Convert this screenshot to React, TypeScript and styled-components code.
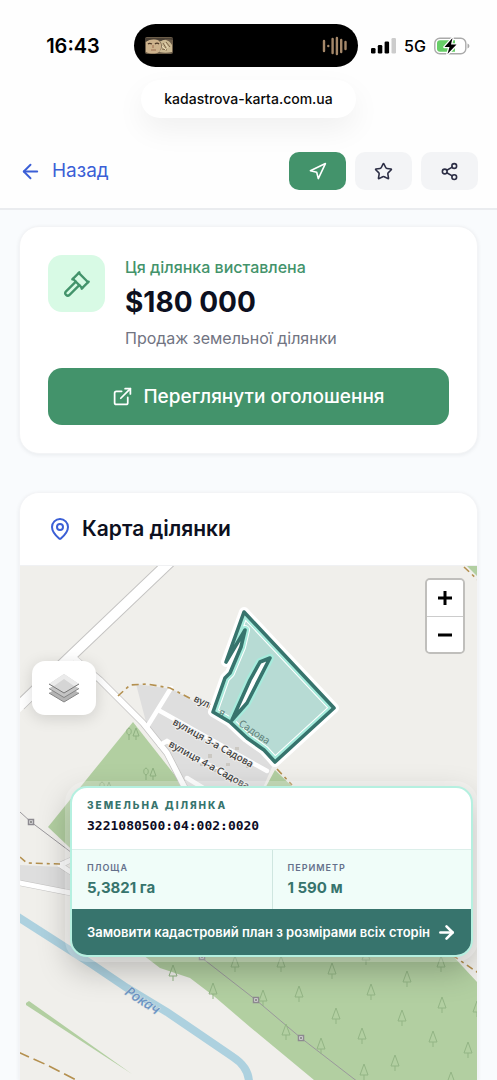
import React from "react";
import styled, { createGlobalStyle } from "styled-components";
import { ArrowLeft, ArrowRight, ExternalLink, Gavel, MapPin, Navigation, Share2, Star } from "lucide-react";

const Global = createGlobalStyle`
  *, *::before, *::after { box-sizing: border-box; }
  body { margin: 0; background: #f9fbfd; color: #0d1020; font-family: Inter, "Liberation Sans", sans-serif; }
  button { font: inherit; cursor: pointer; }
  h2, p, dl, dd { margin: 0; }
`;

const Page = styled.div`
  min-height: 100vh;
  display: flex;
  flex-direction: column;
`;

const Top = styled.header`
  background: #fefefe;
  border-bottom: 2px solid #eaecef;
`;

const StatusBar = styled.div`
  display: grid;
  grid-template-columns: 1fr 224px 1fr;
  align-items: center;
  padding: 24px 5px 0 0;
  color: #000;
`;

const Clock = styled.time`
  padding-left: 12px;
  text-align: center;
  font-size: 20px;
  line-height: 24px;
  font-weight: 600;
`;

const Island = styled.div`
  height: 43px;
  border-radius: 22px;
  background: #000;
  display: flex;
  align-items: center;
  justify-content: space-between;
  padding: 0 10px 0 11px;
`;

const Signals = styled.div`
  display: flex;
  align-items: center;
  gap: 8px;
  padding-left: 13px;
  font-size: 16px;
  line-height: 20px;
  font-weight: 500;
`;

const Address = styled.div`
  width: fit-content;
  margin: 13px auto 0;
  padding: 0 23px;
  border-radius: 20px;
  background: #fff;
  box-shadow: 0 12px 30px rgba(0, 0, 0, 0.06);
  color: #0a0a0a;
  font-size: 14px;
  line-height: 38px;
  font-weight: 500;
`;

const Toolbar = styled.nav`
  display: flex;
  align-items: center;
  justify-content: space-between;
  padding: 34px 19px 18px;
`;

const Back = styled.a`
  display: flex;
  align-items: center;
  gap: 10px;
  color: #3b5fd6;
  text-decoration: none;
  font-size: 19px;
  line-height: 28px;
`;

const Actions = styled.div`
  display: flex;
  gap: 9px;
`;

const Action = styled.button<{ $active?: boolean }>`
  display: grid;
  place-items: center;
  width: 57px;
  height: 38px;
  padding: 0;
  border: 0;
  border-radius: 10px;
  background: ${(p) => (p.$active ? "#43936b" : "#f3f4f6")};
  color: ${(p) => (p.$active ? "#fff" : "#2c2e45")};
`;

const Main = styled.main`
  flex: 1;
  display: flex;
  flex-direction: column;
  gap: 38px;
  padding: 16px 19px 0;
`;

const Card = styled.section`
  border: 1px solid #f3f4f6;
  border-radius: 20px;
  background: #fff;
  box-shadow: 0 1px 4px rgba(15, 23, 42, 0.07);
`;

const Listing = styled(Card)`
  display: flex;
  flex-direction: column;
  gap: 17px;
  padding: 28px;
`;

const Offer = styled.div`
  display: flex;
  gap: 20px;
`;

const IconTile = styled.div`
  display: grid;
  place-items: center;
  flex: none;
  width: 57px;
  height: 57px;
  border-radius: 14px;
  background: #d8fae5;
  color: #43936b;
`;

const Kicker = styled.p`
  color: #43936b;
  font-size: 16px;
  line-height: 24px;
  font-weight: 500;
`;

const Price = styled.p`
  font-size: 28px;
  line-height: 46px;
  font-weight: 700;
`;

const Caption = styled.p`
  color: #717482;
  font-size: 16px;
  line-height: 26px;
`;

const Primary = styled.button`
  display: flex;
  align-items: center;
  justify-content: center;
  gap: 10px;
  height: 57px;
  border: 0;
  border-radius: 14px;
  background: #43936b;
  color: #fff;
  font-size: 19px;
  font-weight: 500;
`;

const MapCard = styled(Card)`
  flex: 1;
  display: flex;
  flex-direction: column;
  overflow: hidden;
  border-bottom: 0;
  border-radius: 20px 20px 0 0;
`;

const MapHeader = styled.div`
  display: flex;
  align-items: center;
  gap: 10px;
  padding: 20px 28px;
  border-bottom: 1px solid #f0f1f3;
  svg { color: #3b5fd6; }
`;

const Title = styled.h2`
  font-size: 21px;
  line-height: 32px;
  font-weight: 600;
`;

const MapView = styled.div`
  position: relative;
  flex: 1;
  min-height: 480px;
  background: #f0efeb;
`;

const MapSvg = styled.svg`
  position: absolute;
  inset: 0;
  width: 100%;
  height: 100%;
`;

const ZoomBox = styled.div`
  position: absolute;
  top: 12px;
  right: 12px;
  width: 40px;
  border: 2px solid rgba(0, 0, 0, 0.2);
  border-radius: 5px;
  background-clip: padding-box;
  overflow: hidden;
`;

const ZoomButton = styled.button`
  display: grid;
  place-items: center;
  width: 100%;
  height: 36px;
  padding: 0;
  border: 0;
  background: #fff;
  color: #000;
  & + & { border-top: 1px solid #ccc; }
`;

const Layers = styled.button`
  position: absolute;
  top: 95px;
  left: 12px;
  display: grid;
  place-items: center;
  width: 64px;
  height: 54px;
  padding: 0;
  border: 0;
  border-radius: 13px;
  background: #fff;
  box-shadow: 0 3px 16px rgba(0, 0, 0, 0.14);
`;

const Popup = styled.article`
  position: absolute;
  top: 220px;
  left: 50px;
  right: 4px;
  border: 2px solid #b5f0e0;
  border-radius: 17px;
  overflow: hidden;
  background: #fff;
  box-shadow: 0 0 0 5px rgba(255, 255, 255, 0.22), 0 12px 32px rgba(0, 0, 0, 0.25);
`;

const PopupHead = styled.div`
  padding: 8px 15px 11px;
`;

const PopupKicker = styled.p`
  color: #37746d;
  font-size: 10px;
  line-height: 18px;
  font-weight: 800;
  letter-spacing: 2px;
`;

const Cadastral = styled.p`
  color: #0d0c25;
  font-family: "DejaVu Sans Mono", monospace;
  font-size: 13px;
  line-height: 24px;
  font-weight: 700;
`;

const Stats = styled.dl`
  display: grid;
  grid-template-columns: 1fr 1fr;
  border-top: 1px solid #dcefea;
  background: #f0fdf9;
`;

const Stat = styled.div`
  padding: 9px 15px 11px;
  & + & { border-left: 1px solid #cfe6e0; }
  dt { color: #64708b; font-size: 9px; line-height: 18px; font-weight: 600; letter-spacing: 1px; }
  dd { color: #37746d; font-size: 15px; line-height: 21px; font-weight: 700; }
`;

const Order = styled.button`
  display: flex;
  align-items: center;
  justify-content: space-between;
  width: 100%;
  height: 46px;
  padding: 0 14px 0 15px;
  border: 0;
  background: #37746d;
  color: #fff;
  font-size: 13px;
  font-weight: 600;
  white-space: nowrap;
`;

const PARCEL = "M244 612 334 708 275 762 264 750 247 738 230 722 213 712 225 678 230 673 241 647 245 630 226 662Z";
const GAP = "M232 720 250 680 260 662 270 658 247 703Z";

const firs = [
  [281, 963], [332, 970], [366, 956], [407, 978], [441, 963], [263, 997], [299, 993],
  [371, 991], [442, 1004], [336, 1015], [402, 1017], [286, 1031], [362, 1035], [433, 1038],
  [468, 1049], [321, 1045], [395, 1062], [364, 1071], [451, 1079], [477, 1008],
  [173, 972], [213, 990], [235, 963],
];

const TerrainMap = () => (
  <MapSvg viewBox="20 566 457 514" preserveAspectRatio="xMidYMid slice" aria-hidden="true">
    <defs>
      <clipPath id="parcel"><path d={`${PARCEL} ${GAP}`} clipRule="evenodd" /></clipPath>
      <g id="fir" fill="none" stroke="#93b585" strokeWidth="1"><path d="M0-7 4 4H-4ZM0 4v5" /></g>
      <g id="grove" fill="none" stroke="#8fb181" strokeWidth="1">
        <path d="M-3-5c3 1 3 6 0 7-3-1-3-6 0-7ZM-3 2v5M4-5 7 3H1ZM4 3v4" />
      </g>
      <g id="pylon"><path d="M-2.500-2.500h5v5h-5Z" fill="#ddd" stroke="#8d8a90" strokeWidth="1.500" /><path d="M-1 0h2" stroke="#777" strokeWidth="1.500" /></g>
    </defs>
    <rect x="20" y="566" width="457" height="514" fill="#f0efeb" />
    <g fill="#b2cfa1">
      <path d="M133 722 188 792V960L48 827Z" />
      <path d="M275 770 300 794H262ZM467 566h10v10Z" />
      <path d="M143 955 160 968 190 978 215 997 250 1027 314 1080H477V982L452 955Z" />
      <path d="M26 1003 29 1001 132 1074 26 1005Z" />
    </g>
    <path d="M136 684 172 689 213 712 247 734 272 767 262 790H187L146 722Z" fill="#dedede" />
    <path d="M20 865 60 867 76 877V894L20 881Z" fill="#dedede" />
    <g fill="none" stroke="#c5c4c3" strokeLinejoin="round">
      <path d="M176 556 70 657 20 705" strokeWidth="12" />
      <path d="M70 655 100 680 143 723 167 753 187 792" strokeWidth="7" />
      <path d="M20 883 76 894M60 865 80 856M60 865 80 878" strokeWidth="6" />
    </g>
    <g fill="none" stroke="#fff" strokeLinejoin="round" strokeLinecap="round">
      <path d="M176 556 70 657 15 710" strokeWidth="10" />
      <path d="M72 656 100 680 143 723 167 753 187 792" strokeWidth="5.500" />
      <path d="M171 688 147 727M160 711 267 771M167 741 160 745M167 741 252 790M187 778 205 789" strokeWidth="4.500" />
      <path d="M15 882 76 894M60 865 80 856M60 865 80 878" strokeWidth="5" />
    </g>
    <g fill="none" stroke="#b4904f" strokeWidth="1.600" strokeDasharray="7 4 3 4">
      <path d="M118 696 130 685 147 684 170 688 213 710M277 769 292 785M464 567 480 582" />
      <path d="M20 857 27 863 60 864M452 955 480 974" />
      <path d="M18 1052 47 1065 78 1081" strokeDasharray="12 5" />
    </g>
    <path d="M15 915 93 965 127 988 167 1012 233 1057Q250 1068 249 1085" fill="none" stroke="#add1df" strokeWidth="8" />
    <path d="M20 812 31 822 80 859M202 958 256 1000 301 1038 358 1082" fill="none" stroke="#9a989c" strokeWidth="1" />
    <use href="#pylon" x="31" y="822" /><use href="#pylon" x="202" y="957" />
    <use href="#pylon" x="256" y="1000" /><use href="#pylon" x="301" y="1038" />
    {firs.map(([x, y]) => <use key={`${x}-${y}`} href="#fir" x={x} y={y} />)}
    <use href="#grove" x="132" y="733" /><use href="#grove" x="149" y="773" /><use href="#grove" x="105" y="787" />
    <g fill="#cbc8c2">
      <path d="M235 747h4v3h-4ZM208 754h4v4h-4ZM226 763h4v3h-4ZM200 763h4v3h-4ZM213 769h4v3h-4ZM246 765h4v3h-4Z" />
    </g>
    <g fontFamily="'Noto Sans', sans-serif" fontSize="10" fontWeight="500" fill="#3c3c3c" stroke="#f1f0ee" strokeWidth="2" paintOrder="stroke">
      <text transform="translate(193 701) rotate(25)">вули</text>
      <text transform="translate(172 724) rotate(29)">вулиця 3-а Садова</text>
      <text transform="translate(168 746) rotate(29)">вулиця 4-а Садова</text>
    </g>
    <path d={PARCEL} fill="#b7dbd4" stroke="#fff" strokeWidth="10" strokeLinejoin="round" />
    <g clipPath="url(#parcel)">
      <path d={`${PARCEL} ${GAP}`} fill="none" stroke="#a6ebdc" strokeWidth="8" strokeLinejoin="round" />
    </g>
    <path d={GAP} fill="#fff" />
    <g fontFamily="'Noto Sans', sans-serif" fontSize="10" fill="#5f8078">
      <text transform="translate(238 725) rotate(34)">Садова</text>
      <text transform="translate(218 714) rotate(30)">я</text>
    </g>
    <g fill="none" stroke="#37746d" strokeWidth="3.600" strokeLinejoin="round">
      <path d={PARCEL} />
      <path d={GAP} />
    </g>
    <text transform="translate(124 994) rotate(33)" fontFamily="'Noto Sans', sans-serif" fontStyle="italic" fontWeight="500" fontSize="14" fill="#6b94c4" stroke="#d5dfe3" strokeWidth="1" paintOrder="stroke">Рокач</text>
  </MapSvg>
);

const Portrait = () => (
  <svg width="28" height="17" viewBox="0 0 28 17" aria-hidden="true">
    <rect width="28" height="17" rx="2" fill="#6c5d49" />
    <path d="M1 5C3 2 12 1 15 5c2 3 1 8-1 10-3 2-9 2-13 0Z" fill="#cdb28c" />
    <path d="M15 4c5-3 10 0 12 4v7c-4 1-9 1-13 0 3-3 4-7 1-11Z" fill="#cbb993" />
    <path d="M0 1h28v2c-5-1-8-1-12 1C10 1 5 2 0 5Z" fill="#4a4035" />
    <path d="M3 7c1-1 2-1 4 0M10 7c1-1 3-1 4 0" stroke="#4e3928" strokeWidth="1.300" fill="none" />
    <path d="M8 8v3M6 13h5" stroke="#9c6c50" strokeWidth="1" />
    <path d="M18 6l3 5M21 5l4 5M17 12l5 1" stroke="#7c6547" strokeWidth="1" />
    <path d="M20 6l3 5M17 9l4 4" stroke="#eadbb7" strokeWidth="1" />
  </svg>
);

const Waveform = () => (
  <svg width="26" height="20" viewBox="0 0 26 20" stroke="#a5886a" strokeWidth="2.400" strokeLinecap="round" aria-hidden="true">
    <path d="M2 5v10M6.300 10v.100M10.600 3v14M14.900 2v16M19.200 4v12M23.500 6v7" />
  </svg>
);

const Cellular = () => (
  <svg width="25" height="16" viewBox="0 0 25 16" aria-hidden="true">
    <rect y="10" width="4.500" height="5.500" rx="1.300" /><rect x="6.800" y="7" width="4.500" height="8.500" rx="1.300" />
    <rect x="13.600" y="3.500" width="4.500" height="12" rx="1.300" /><rect x="20.500" width="4.500" height="15.500" rx="1.300" fill="#ccc" />
  </svg>
);

const Battery = () => (
  <svg width="36" height="18" viewBox="0 0 36 18" aria-hidden="true">
    <rect x=".800" y="1.200" width="31" height="15.500" rx="5" fill="#fff" stroke="#aaa" strokeWidth="1.400" />
    <path d="M6 3.200h15v11.500H6a3 3 0 0 1-3-3V6.200a3 3 0 0 1 3-3Z" fill="#67ce67" />
    <path d="M33.500 6.500c2.500.800 2.500 4.200 0 5Z" fill="#aaa" />
    <path d="M18.500 1 10.500 10h5L13.500 17l9-9.500h-5.500Z" stroke="#fff" strokeWidth="2.600" paintOrder="stroke" strokeLinejoin="round" />
  </svg>
);

const LayersIcon = () => (
  <svg width="32" height="30" viewBox="0 0 32 30" aria-hidden="true">
    <path d="M1 20 16 11l15 9-15 9Z" fill="#b4b4b4" /><path d="M1 20l15 9 15-9" fill="none" stroke="#858585" />
    <path d="M1 15.500 16 6l15 9.500-15 9Z" fill="#c4c4c4" /><path d="M1 15.500l15 9 15-9" fill="none" stroke="#858585" />
    <path d="M1 11 16 1l15 10-15 9Z" fill="#d5d5d5" /><path d="M1 11 16 1l15 10-5 2-10-7-10 7Z" fill="#ebebeb" />
    <path d="M1 11l15 9 15-9" fill="none" stroke="#777" />
  </svg>
);

export default function App() {
  return (
    <>
      <Global />
      <Page>
        <Top>
          <StatusBar>
            <Clock>16:43</Clock>
            <Island><Portrait /><Waveform /></Island>
            <Signals><Cellular /><span>5G</span><Battery /></Signals>
          </StatusBar>
          <Address>kadastrova-karta.com.ua</Address>
          <Toolbar>
            <Back href="#"><ArrowLeft size={23} strokeWidth={2} />Назад</Back>
            <Actions>
              <Action $active aria-label="Навігація"><Navigation size={19} /></Action>
              <Action aria-label="Обране"><Star size={19} /></Action>
              <Action aria-label="Поділитися"><Share2 size={19} /></Action>
            </Actions>
          </Toolbar>
        </Top>
        <Main>
          <Listing>
            <Offer>
              <IconTile><Gavel size={28} /></IconTile>
              <div>
                <Kicker>Ця ділянка виставлена</Kicker>
                <Price>$180 000</Price>
                <Caption>Продаж земельної ділянки</Caption>
              </div>
            </Offer>
            <Primary><ExternalLink size={21} />Переглянути оголошення</Primary>
          </Listing>
          <MapCard>
            <MapHeader><MapPin size={24} /><Title>Карта ділянки</Title></MapHeader>
            <MapView>
              <TerrainMap />
              <ZoomBox>
                <ZoomButton aria-label="Збільшити"><svg width="14" height="14" viewBox="0 0 14 14"><path d="M7 0v14M0 7h14" stroke="#000" strokeWidth="3" /></svg></ZoomButton>
                <ZoomButton aria-label="Зменшити"><svg width="14" height="14" viewBox="0 0 14 14"><path d="M0 7h14" stroke="#000" strokeWidth="3" /></svg></ZoomButton>
              </ZoomBox>
              <Layers aria-label="Шари"><LayersIcon /></Layers>
              <Popup>
                <PopupHead>
                  <PopupKicker>ЗЕМЕЛЬНА ДІЛЯНКА</PopupKicker>
                  <Cadastral>3221080500:04:002:0020</Cadastral>
                </PopupHead>
                <Stats>
                  <Stat><dt>ПЛОЩА</dt><dd>5,3821 га</dd></Stat>
                  <Stat><dt>ПЕРИМЕТР</dt><dd>1 590 м</dd></Stat>
                </Stats>
                <Order>Замовити кадастровий план з розмірами всіх сторін<ArrowRight size={21} strokeWidth={3} /></Order>
              </Popup>
            </MapView>
          </MapCard>
        </Main>
      </Page>
    </>
  );
}
